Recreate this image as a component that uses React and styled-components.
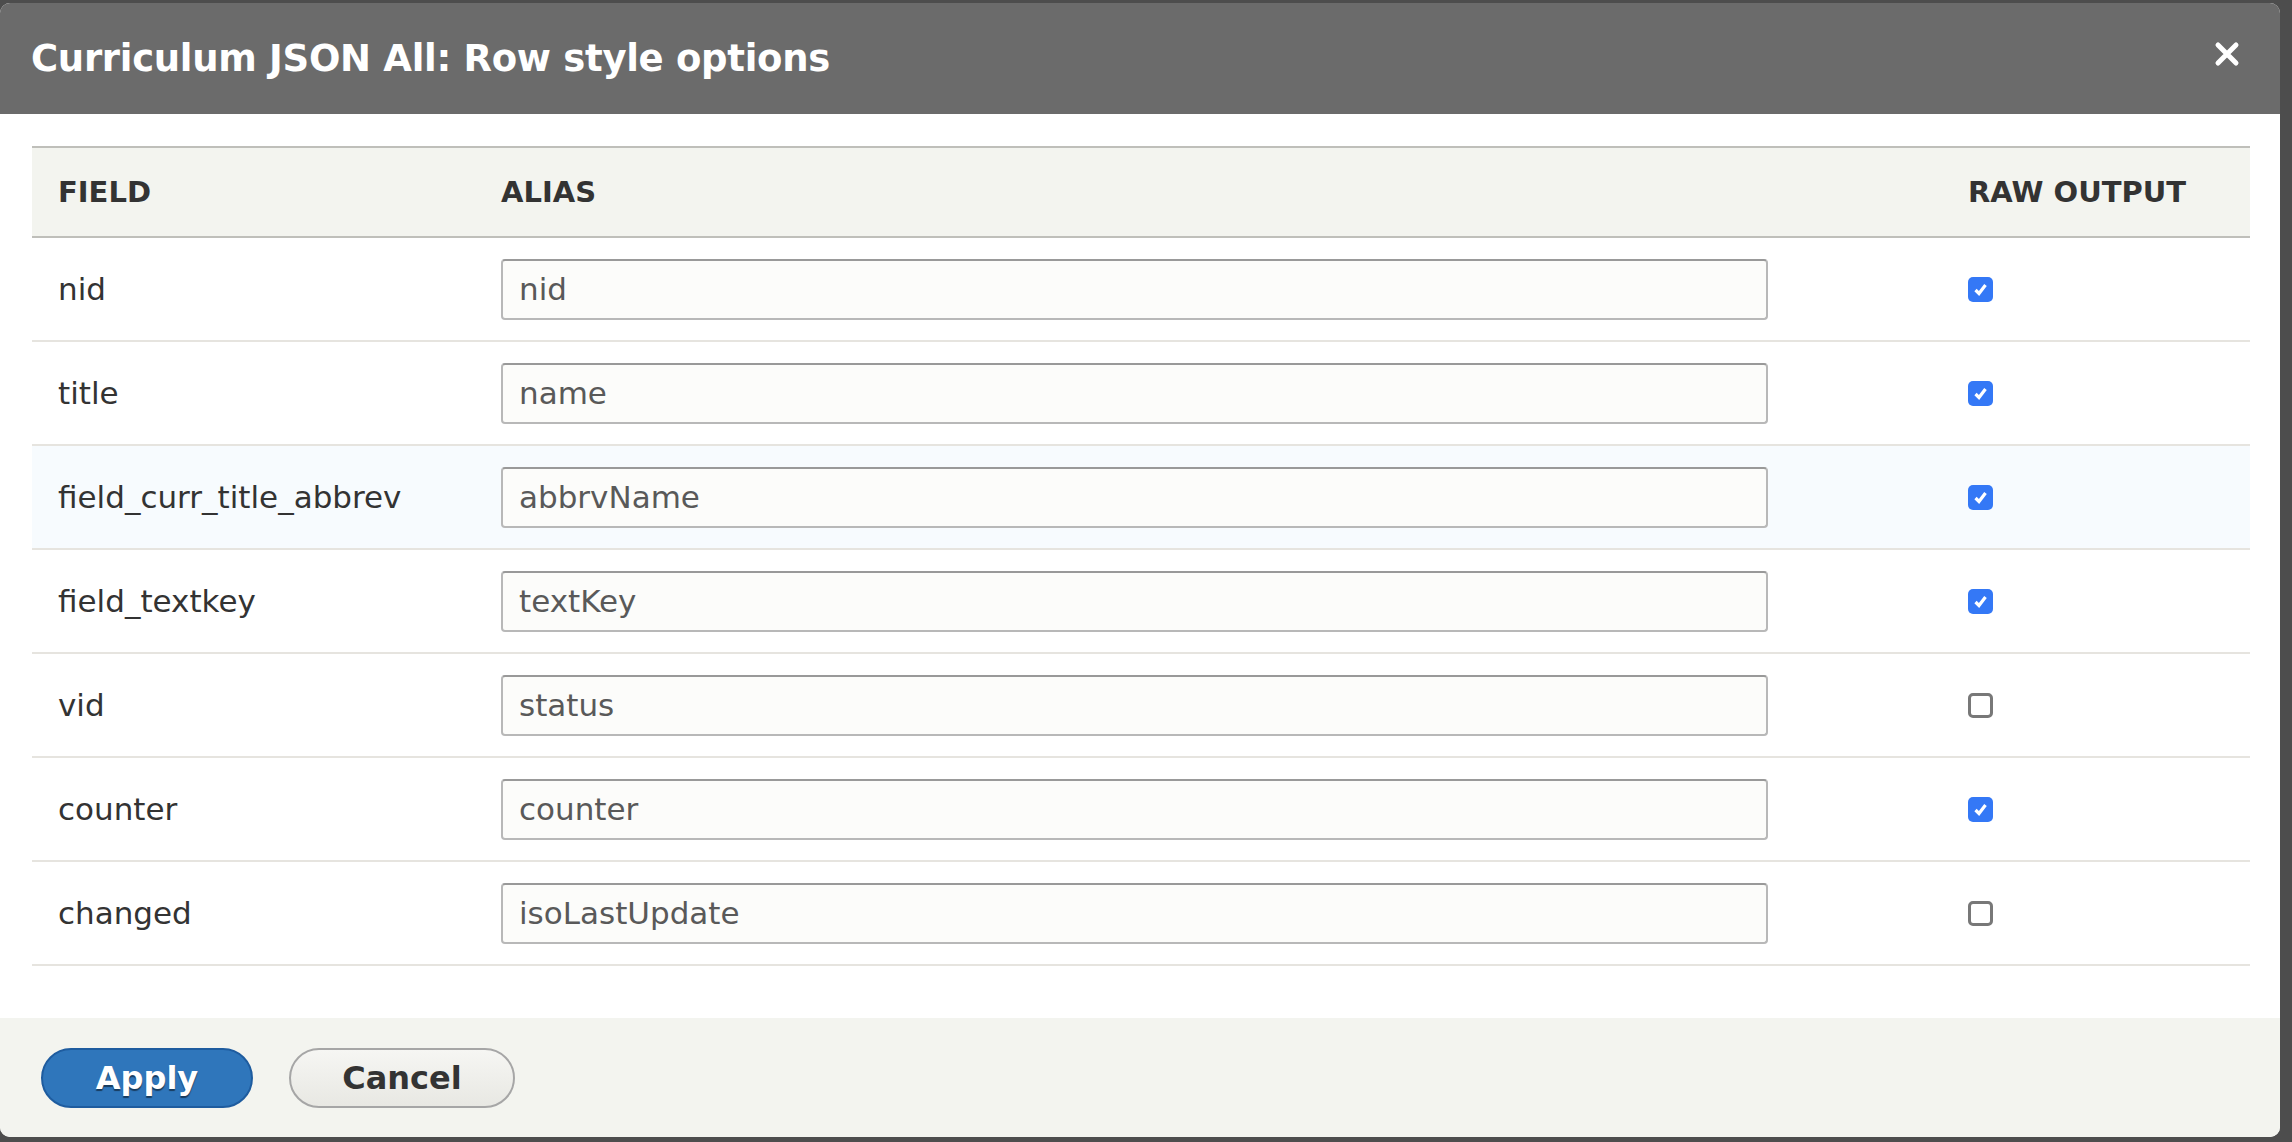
import React from 'react';
import styled, { createGlobalStyle } from 'styled-components';

const GlobalStyle = createGlobalStyle`
  html, body {
    margin: 0;
    padding: 0;
    background: #4d4d4d;
  }
  body {
    font-family: "DejaVu Sans", Verdana, sans-serif;
    color: #333;
  }
`;

const Overlay = styled.div`
  width: 2292px;
  height: 1142px;
  padding-top: 3px;
  box-sizing: border-box;
  background: #4d4d4d;
  overflow: hidden;
`;

const Dialog = styled.div`
  width: 2280px;
  height: 1134px;
  background: #fff;
  border-radius: 10px;
  overflow: hidden;
  display: flex;
  flex-direction: column;
`;

const Header = styled.div`
  height: 111px;
  flex: none;
  background: #6b6b6b;
  display: flex;
  align-items: center;
  justify-content: space-between;
  padding: 0 40px 0 31px;
`;

const Title = styled.h1`
  margin: 0;
  font-size: 37px;
  font-weight: bold;
  color: #fff;
  letter-spacing: -0.3px;
`;

const CloseButton = styled.button`
  border: 0;
  background: none;
  padding: 0;
  margin-bottom: 10px;
  width: 26px;
  height: 26px;
  display: flex;
  cursor: pointer;
`;

const Body = styled.div`
  flex: 1;
  padding: 32px 30px 52px 32px;
`;

const Table = styled.div`
  display: grid;
  grid-template-columns: 443px 1467px 1fr;
`;

const HeadCell = styled.div`
  height: 88px;
  display: flex;
  align-items: center;
  padding-left: 26px;
  background: #f3f4ef;
  border-top: 2px solid #bfbfba;
  border-bottom: 2px solid #bfbfba;
  font-size: 29px;
  font-weight: bold;
  text-transform: uppercase;
  color: #333;
`;

const Cell = styled.div`
  height: 102px;
  display: flex;
  align-items: center;
  padding-left: 26px;
  border-bottom: 2px solid #e6e4df;
  background: ${p => (p.$hover ? '#f7fbfe' : '#fff')};
  font-size: 31px;
  color: #333;
`;

const AliasInput = styled.input`
  width: 1267px;
  height: 61px;
  box-sizing: border-box;
  border: 2px solid #b8b8b8;
  border-top-color: #999;
  border-radius: 4px;
  background: #fcfcfa;
  padding: 0 16px;
  font-family: "DejaVu Sans", Verdana, sans-serif;
  font-size: 31px;
  color: #595959;
  outline: none;
`;

const Check = styled.span`
  width: 25px;
  height: 25px;
  box-sizing: border-box;
  border-radius: 5px;
  display: flex;
  align-items: center;
  justify-content: center;
  background: ${p => (p.$on ? '#3478f6' : '#fff')};
  border: ${p => (p.$on ? 'none' : '3px solid #787878')};
`;

const Footer = styled.div`
  height: 120px;
  flex: none;
  background: #f3f4ef;
  display: flex;
  align-items: center;
  gap: 36px;
  padding: 0 0 0 41px;
`;

const Button = styled.button`
  height: 60px;
  width: ${p => p.$w}px;
  border-radius: 30px;
  font-family: "DejaVu Sans", Verdana, sans-serif;
  font-size: 32px;
  font-weight: bold;
  cursor: pointer;
  padding: 0;
  border: 2px solid ${p => (p.$primary ? '#1e5c9f' : '#a6a6a6')};
  color: ${p => (p.$primary ? '#fff' : '#333')};
  background: ${p =>
    p.$primary ? '#2f76bb' : 'linear-gradient(to bottom, #f6f6f3, #e8e8e3)'};
  text-shadow: ${p => (p.$primary ? '0 2px 1px rgba(0,0,0,0.5)' : 'none')};
`;

const rows = [
  { field: 'nid', alias: 'nid', raw: true },
  { field: 'title', alias: 'name', raw: true },
  { field: 'field_curr_title_abbrev', alias: 'abbrvName', raw: true, hover: true },
  { field: 'field_textkey', alias: 'textKey', raw: true },
  { field: 'vid', alias: 'status', raw: false },
  { field: 'counter', alias: 'counter', raw: true },
  { field: 'changed', alias: 'isoLastUpdate', raw: false },
];

const App = () => (
  <Overlay>
    <GlobalStyle />
    <Dialog>
      <Header>
        <Title>Curriculum JSON All: Row style options</Title>
        <CloseButton aria-label="Close">
          <svg width="26" height="26" viewBox="0 0 26 26">
            <path d="M4 4 L22 22 M22 4 L4 22" stroke="#fff" strokeWidth="5" strokeLinecap="round" />
          </svg>
        </CloseButton>
      </Header>
      <Body>
        <Table>
          <HeadCell>Field</HeadCell>
          <HeadCell>Alias</HeadCell>
          <HeadCell>Raw output</HeadCell>
          {rows.map(r => (
            <React.Fragment key={r.field}>
              <Cell $hover={r.hover}>{r.field}</Cell>
              <Cell $hover={r.hover}>
                <AliasInput defaultValue={r.alias} />
              </Cell>
              <Cell $hover={r.hover}>
                <Check $on={r.raw}>
                  {r.raw && (
                    <svg width="17" height="17" viewBox="0 0 17 17">
                      <path d="M3.5 9 L7 12.5 L13.5 4" fill="none" stroke="#fff" strokeWidth="3.2" />
                    </svg>
                  )}
                </Check>
              </Cell>
            </React.Fragment>
          ))}
        </Table>
      </Body>
      <Footer>
        <Button $primary $w={212}>Apply</Button>
        <Button $w={226}>Cancel</Button>
      </Footer>
    </Dialog>
  </Overlay>
);

export default App;
